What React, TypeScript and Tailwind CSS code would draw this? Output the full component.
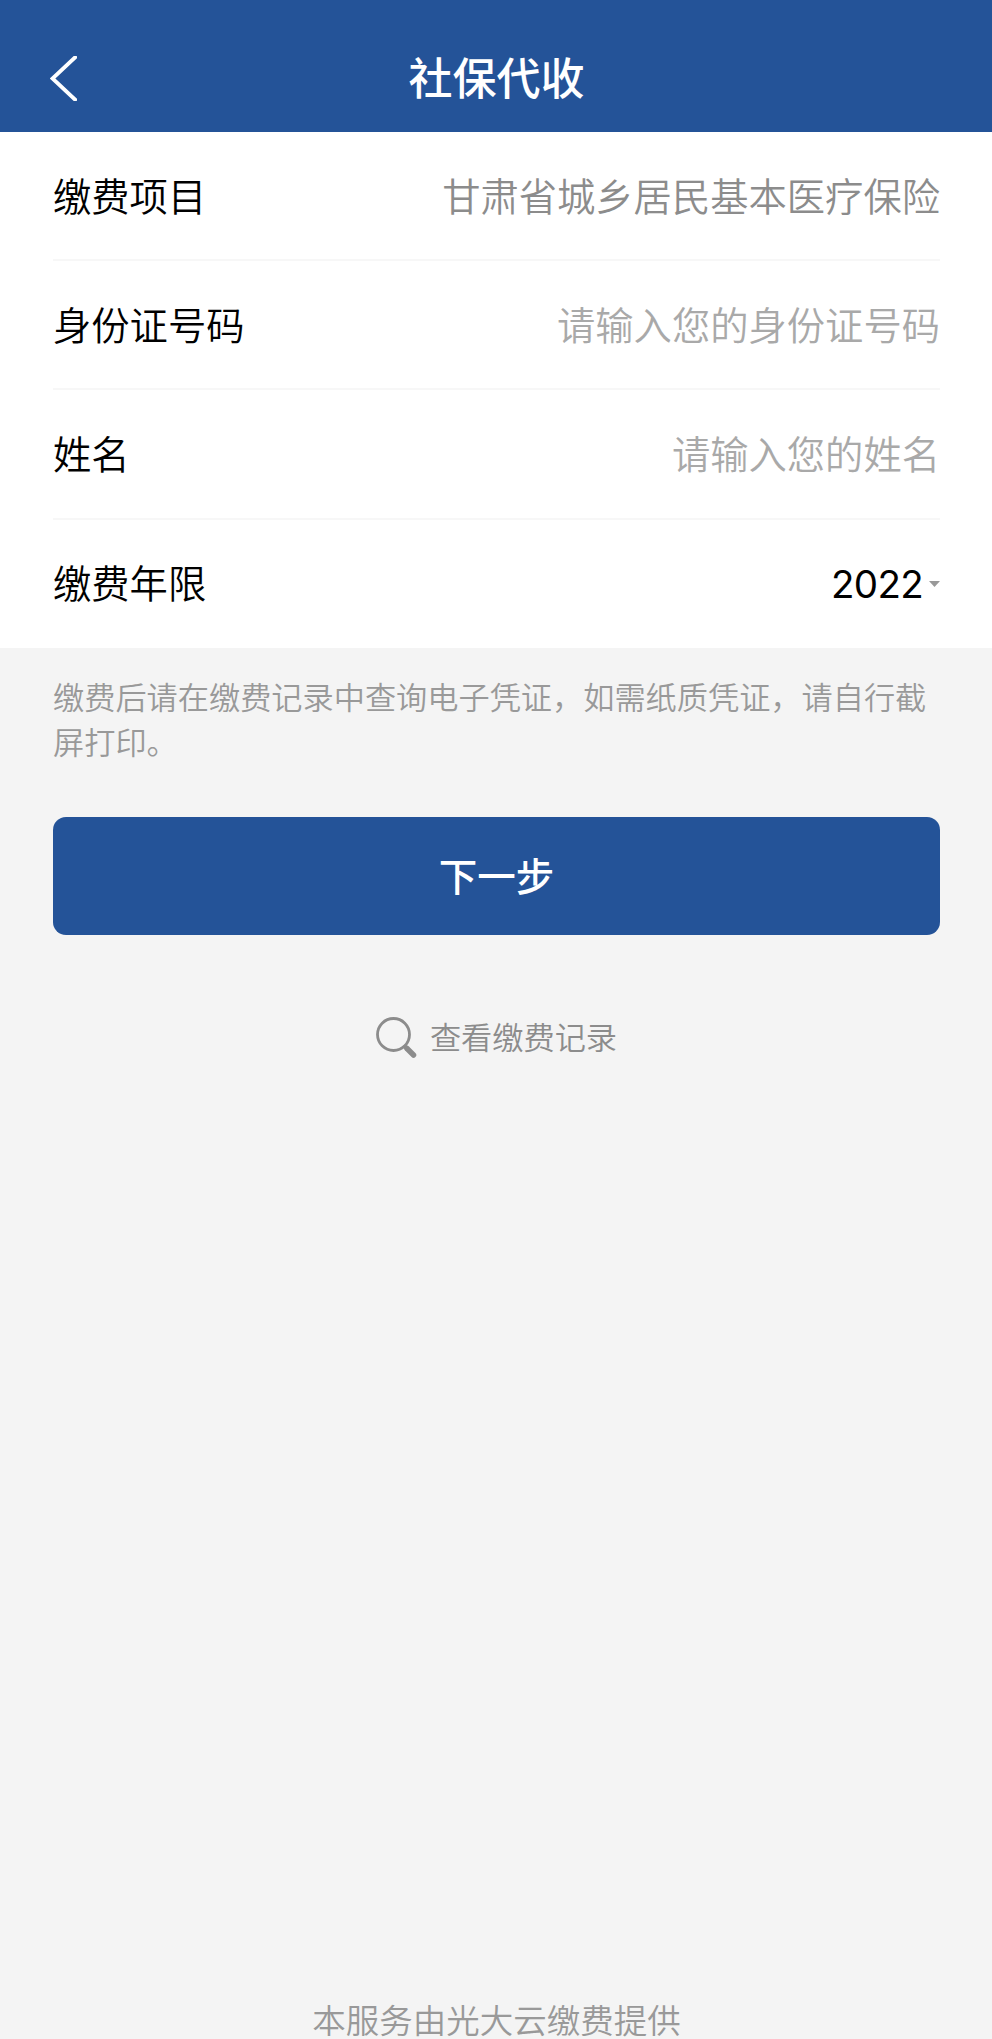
import { useState, type ReactNode } from 'react';

interface FieldRowProps {
  label: string;
  last?: boolean;
  children: ReactNode;
}

function FieldRow({ label, last, children }: FieldRowProps) {
  return (
    <div
      className={`flex h-[129.2px] items-center justify-between pb-[2px] text-[38.3px] leading-[56px] border-b-2 ${
        last ? 'border-transparent' : 'border-[#f7f7f7]'
      }`}
    >
      <label className="flex-shrink-0 text-black">{label}</label>
      {children}
    </div>
  );
}

export default function App() {
  const [idNumber, setIdNumber] = useState('');
  const [name, setName] = useState('');

  return (
    <div className="flex h-[2039px] w-[992px] flex-col overflow-hidden bg-[#f4f4f4] font-['Noto_Sans_CJK_SC',sans-serif] font-[350]">
      {/* Header */}
      <header className="grid h-[132px] flex-shrink-0 grid-cols-[1fr_auto_1fr] items-center bg-[#245398] pt-[24px] text-white">
        <button className="ml-[50px] w-[27px]" aria-label="返回">
          <svg width="27" height="45" viewBox="0 0 27 45" fill="none" stroke="currentColor" strokeWidth="3.8">
            <path d="M26.5 0 L2.5 22.5 L26.5 45" />
          </svg>
        </button>
        <h1 className="pb-[4px] pl-px text-[44px] font-medium leading-[60px]">社保代收</h1>
      </header>

      {/* Form */}
      <section className="h-[516px] flex-shrink-0 bg-white pl-[53px] pr-[52px]">
        <FieldRow label="缴费项目">
          <span className="text-[#8c8c8c]">甘肃省城乡居民基本医疗保险</span>
        </FieldRow>
        <FieldRow label="身份证号码">
          <input
            value={idNumber}
            onChange={(e) => setIdNumber(e.target.value)}
            placeholder="请输入您的身份证号码"
            className="w-[600px] bg-transparent text-right text-black outline-none placeholder:text-[#a9a9a9]"
          />
        </FieldRow>
        <FieldRow label="姓名">
          <input
            value={name}
            onChange={(e) => setName(e.target.value)}
            placeholder="请输入您的姓名"
            className="w-[600px] bg-transparent text-right text-black outline-none placeholder:text-[#a9a9a9]"
          />
        </FieldRow>
        <FieldRow label="缴费年限" last>
          <button className="flex items-center gap-[6px] pt-[4px] text-black">
            <span className="font-['Inter',sans-serif] text-[38.5px] font-[370] tracking-[-0.7px]">2022</span>
            <svg width="11" height="6" viewBox="0 0 11 6" fill="#999999">
              <path d="M0 0h11L5.5 6z" />
            </svg>
          </button>
        </FieldRow>
      </section>

      {/* Hint + submit */}
      <main className="flex flex-1 flex-col pl-[53px] pr-[52px] pt-[25px]">
        <p className="text-[31.2px] leading-[45px] text-[#999999]">
          缴费后请在缴费记录中查询电子凭证，如需纸质凭证，请自行截屏打印。
        </p>
        <button className="mt-[54px] h-[118px] rounded-[13px] bg-[#245398] pb-[3px] text-[38.5px] font-medium text-white">
          下一步
        </button>
        <a href="#" className="mt-[77px] flex items-center justify-center gap-[13px] text-[31.2px] leading-[48px] text-[#8c8c8c]">
          <svg width="41" height="41" viewBox="0 0 41 41" fill="none" stroke="currentColor">
            <circle cx="17.5" cy="17.5" r="16" strokeWidth="2.8" />
            <path d="M28 28.5l4 4" strokeWidth="4" />
            <path d="M31 31.5l6.5 6.5" strokeWidth="5.5" strokeLinecap="round" />
          </svg>
          <span className="pb-[3px]">查看缴费记录</span>
        </a>
      </main>

      {/* Footer */}
      <footer className="h-[42px] flex-shrink-0 pl-px text-center text-[33.5px] leading-[43px] text-[#999999]">
        本服务由光大云缴费提供
      </footer>
    </div>
  );
}
